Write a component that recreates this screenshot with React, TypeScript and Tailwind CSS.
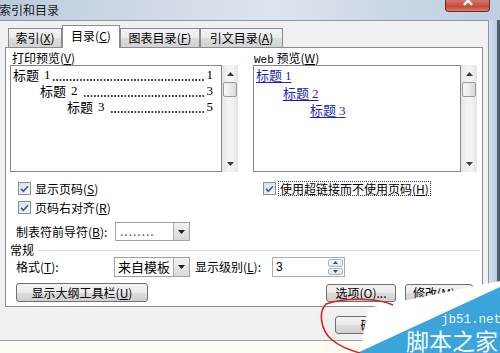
import React from 'react';

const cjk = "font-['Noto_Sans_CJK_SC','Noto_Sans',sans-serif]";
const serif = "font-['Liberation_Serif','Noto_Sans_CJK_SC',serif]";
const btn =
  'flex items-center justify-center rounded-[3px] border border-[#707070] bg-[linear-gradient(#f2f2f2,#ebebeb_50%,#dddddd_50%,#cfcfcf)] text-[12px] leading-[14px]';

function Key({ k }: { k: string }) {
  return (
    <span>
      (<span className="underline underline-offset-1">{k}</span>)
    </span>
  );
}

function ScrollBar() {
  return (
    <div className="flex w-[16px] shrink-0 flex-col bg-[linear-gradient(90deg,#e4e4e4,#f3f3f3_35%,#f3f3f3_65%,#e4e4e4)]">
      <div className="flex h-[17px] items-center justify-center">
        <svg width="7" height="4" viewBox="0 0 7 4">
          <path d="M0 4L3.5 0L7 4Z" fill="#3d3d3d" />
        </svg>
      </div>
      <div className="mx-[1px] h-[15px] rounded-[2px] border border-[#9a9a9a] bg-[linear-gradient(90deg,#f7f7f7,#ebebeb_50%,#d8d8d8)]" />
      <div className="flex-1" />
      <div className="flex h-[17px] items-center justify-center">
        <svg width="7" height="4" viewBox="0 0 7 4">
          <path d="M0 0L3.5 4L7 0Z" fill="#3d3d3d" />
        </svg>
      </div>
    </div>
  );
}

function Check() {
  return (
    <span className="flex h-[13px] w-[13px] shrink-0 items-center justify-center border border-[#8f8f8f] bg-[linear-gradient(135deg,#d9dee6,#f7f9fb)]">
      <svg width="9" height="8" viewBox="0 0 9 8">
        <path d="M1 3.8L3.4 6.3L8 1.2" fill="none" stroke="#4a5d86" strokeWidth="1.7" />
      </svg>
    </span>
  );
}

function DropArrow() {
  return (
    <div className="flex w-[16px] items-center justify-center border-l border-[#a7a7a7] bg-[linear-gradient(#f2f2f2,#d9d9d9)]">
      <svg width="7" height="4" viewBox="0 0 7 4">
        <path d="M0 0L3.5 4L7 0Z" fill="#1e1e1e" />
      </svg>
    </div>
  );
}

const tocLines = [
  { pad: 'ml-0', n: '1', p: '1', gap: 'ml-[1px]' },
  { pad: 'ml-[27px]', n: '2', p: '3', gap: 'ml-[5px]' },
  { pad: 'ml-[54px]', n: '3', p: '5', gap: 'ml-[5px]' },
];

const webLines = ['ml-0', 'ml-[27px]', 'ml-[54px]'];

const tabs = [
  { label: '索引', k: 'X', w: 'w-[54px]', active: false },
  { label: '目录', k: 'C', w: 'w-[58px]', active: true },
  { label: '图表目录', k: 'F', w: 'w-[80px]', active: false },
  { label: '引文目录', k: 'A', w: 'w-[83px]', active: false },
];

export default function App() {
  return (
    <div className={`relative h-[353px] w-[500px] overflow-hidden bg-[#fbfbf3] text-black ${cjk}`}>
      <div className="flex h-[341px] flex-col border-b border-[#9aa0a8]">
        {/* title bar */}
        <div className="flex h-[20px] bg-[linear-gradient(90deg,#bccbdc,#cfdae6_30%,#dce5ee_55%,#c9d6e4_80%,#bfcfe1)]">
          <span className="ml-[-1px] mt-[3px] text-[12px] leading-[14px] text-[#1b1b1b]">索引和目录</span>
          <div className="ml-auto mr-[10px] flex h-[12px] w-[45px] justify-center overflow-hidden rounded-b-[4px] border border-t-0 border-[#6b2a24] bg-[linear-gradient(#d7776a,#c24a3c_60%,#d8826c)]">
            <svg width="12" height="10" viewBox="0 0 12 10" className="-mt-[4px]">
              <path d="M2 0L10 9M10 0L2 9" stroke="#fff" strokeWidth="2.4" />
            </svg>
          </div>
        </div>

        <div className="flex flex-1">
          {/* dialog body */}
          <div className="flex w-[489px] flex-col border-r border-t border-[#8d99a8] bg-[#f0f0f0] pt-[4px]">
            {/* tabs */}
            <div className="flex h-[22px] items-end pl-[8px]">
              {tabs.map((t) =>
                t.active ? (
                  <div
                    key={t.label}
                    className={`relative z-10 -mb-px flex h-[23px] ${t.w} items-center justify-center border border-b-0 border-[#898c95] bg-white text-[12px] leading-[14px]`}
                  >
                    <span className="-mt-[2px]">
                      {t.label}
                      <Key k={t.k} />
                    </span>
                  </div>
                ) : (
                  <div
                    key={t.label}
                    className={`flex h-[19px] ${t.w} items-center justify-center border border-b-0 border-[#898c95] bg-[linear-gradient(#f3f3f3,#ebebeb_50%,#dddddd_50%,#d2d2d2)] text-[12px] leading-[14px]`}
                  >
                    {t.label}
                    <Key k={t.k} />
                  </div>
                ),
              )}
            </div>

            {/* tab panel */}
            <div className="ml-[5px] flex h-[260px] w-[478px] flex-col border border-[#898c95] bg-white px-[4px] pt-[3px] text-[12px] leading-[14px]">
              <div className="flex gap-[15px]">
                {/* left column */}
                <div className="flex w-[228px] shrink-0 flex-col">
                  <div className="h-[14px] pl-[2px]">
                    打印预览<Key k="V" />
                  </div>
                  <div className="flex h-[107px]">
                    <div className="flex min-w-0 flex-1 flex-col border border-[#828790] bg-white pl-[2px] pr-[8px] pt-[1px]">
                      {tocLines.map((l) => (
                        <div key={l.n} className={`flex h-[16px] items-center whitespace-nowrap text-[13px] leading-[16px] ${l.pad}`}>
                          <span>标题</span>
                          <span className={`${serif} ml-[5px]`}>{l.n}</span>
                          <span
                            className={`${l.gap} mr-[2px] mt-[9px] h-[2px] w-0 flex-1 bg-[radial-gradient(circle,#111_0.6px,transparent_0.9px)] bg-[length:3.4px_2px] bg-repeat-x`}
                          />
                          <span className={serif}>{l.p}</span>
                        </div>
                      ))}
                    </div>
                    <ScrollBar />
                  </div>
                  <div className="mt-[9px] flex h-[15px] items-center gap-[4px] pl-[8px]">
                    <Check />
                    <span>
                      显示页码<Key k="S" />
                    </span>
                  </div>
                  <div className="mt-[4px] flex h-[15px] items-center gap-[4px] pl-[8px]">
                    <Check />
                    <span>
                      页码右对齐<Key k="R" />
                    </span>
                  </div>
                  <div className="mt-[7px] flex h-[19px] items-center">
                    <span className="w-[105px] pl-[6px]">
                      制表符前导符<Key k="B" />:
                    </span>
                    <div className="flex h-[19px] w-[75px] border border-[#a0a0a0] bg-white">
                      <span className="flex-1 pl-[4px] leading-[15px] tracking-[1px] text-[#555]">........</span>
                      <DropArrow />
                    </div>
                  </div>
                </div>

                {/* right column */}
                <div className="flex w-[224px] shrink-0 flex-col">
                  <div className="h-[14px] pl-[1px]">
                    <span className="font-['Liberation_Mono',monospace] text-[11px]">Web</span> 预览<Key k="W" />
                  </div>
                  <div className="flex h-[107px]">
                    <div className="flex min-w-0 flex-1 flex-col border border-[#828790] bg-white pl-[2px] pt-[1px]">
                      {webLines.map((pad, i) => (
                        <div key={pad} className={`flex h-[17.5px] items-center text-[13px] leading-[16px] ${pad}`}>
                          <span className="text-[#1f1fb8] underline underline-offset-2">
                            标题 <span className={serif}>{i + 1}</span>
                          </span>
                        </div>
                      ))}
                    </div>
                    <ScrollBar />
                  </div>
                  <div className="mt-[9px] flex h-[15px] items-center gap-[2px] pl-[10px]">
                    <Check />
                    <span className="border border-dotted border-[#444] px-[1px] leading-[13px]">
                      使用超链接而不使用页码<Key k="H" />
                    </span>
                  </div>
                </div>
              </div>

              {/* general */}
              <div className="mt-[2px] flex h-[14px] items-center">
                <span>常规</span>
                <div className="-mr-[2px] ml-[4px] h-px flex-1 bg-[#dde3ea]" />
              </div>
              <div className="flex h-[20px] items-center">
                <span className="w-[104px] pl-[6px]">
                  格式<Key k="T" />:
                </span>
                <div className="flex h-[20px] w-[76px] border border-[#a0a0a0] bg-white">
                  <span className="flex-1 pl-[3px] text-[13px] leading-[18px]">来自模板</span>
                  <DropArrow />
                </div>
                <span className="ml-[5px] w-[77px]">
                  显示级别<Key k="L" />:
                </span>
                <div className="flex h-[20px] w-[73px] border border-[#abadb3] bg-white">
                  <span className="flex-1 pl-[3px] font-['Liberation_Sans',sans-serif] text-[12px] leading-[18px]">3</span>
                  <div className="flex w-[17px] flex-col gap-px p-px">
                    <div className="flex flex-1 items-center justify-center rounded-[2px] border border-[#a9b7c9] bg-[linear-gradient(#f4f7fa,#dfe6ee)]">
                      <svg width="5" height="3" viewBox="0 0 5 3">
                        <path d="M0 3L2.5 0L5 3Z" fill="#3b4a5e" />
                      </svg>
                    </div>
                    <div className="flex flex-1 items-center justify-center rounded-[2px] border border-[#a9b7c9] bg-[linear-gradient(#f4f7fa,#dfe6ee)]">
                      <svg width="5" height="3" viewBox="0 0 5 3">
                        <path d="M0 0L2.5 3L5 0Z" fill="#3b4a5e" />
                      </svg>
                    </div>
                  </div>
                </div>
              </div>
              <div className="mt-[6px] flex h-[19px] items-center">
                <div className={`${btn} ml-[6px] h-[19px] w-[132px]`}>
                  显示大纲工具栏<Key k="U" />
                </div>
                <div className={`${btn} ml-auto h-[18px] w-[70px]`}>
                  选项<Key k="O" />...
                </div>
                <div className={`${btn} ml-[9px] mr-[5px] h-[18px] w-[68px]`}>
                  修改<Key k="M" />...
                </div>
              </div>
            </div>

            {/* bottom buttons */}
            <div className="mt-[9px] flex h-[18px]">
              <div className={`${btn} ml-[335px] h-[18px] w-[75px] border-[#3c7fb1]`}>确定</div>
              <div className={`${btn} ml-[8px] h-[18px] w-[64px]`}>取消</div>
            </div>
          </div>

          {/* window frame */}
          <div className="flex flex-1">
            <div className="flex-1 bg-[linear-gradient(90deg,#d4e1ee,#b9cde2)]" />
            <div className="w-[3px] bg-[#4f5f74]" />
          </div>
        </div>
      </div>

      {/* overlay: red hand-drawn mark and watermark */}
      <svg className="pointer-events-none absolute left-0 top-0" width="500" height="353" viewBox="0 0 500 353">
        <polygon points="368,308 500,281 500,353 360,353" fill="#ffffff" />
        <polygon points="357,353 500,287 500,353" fill="#3ba4db" />
        <path
          d="M393 305 C378 298 345 297 326 304 C318 312 321 330 331 339 C340 347 350 350 360 353"
          fill="none"
          stroke="#d3261f"
          strokeWidth="1.6"
        />
      </svg>
      <span className="pointer-events-none absolute left-[441px] top-[313px] font-['Liberation_Mono',monospace] text-[12.5px] leading-[14px] text-[#eef7fd]">
        jb51.net
      </span>
      <span className="pointer-events-none absolute left-[406px] top-[327px] text-[23px] leading-[26px] text-[#f5fbff]">
        脚本之家
      </span>
    </div>
  );
}
